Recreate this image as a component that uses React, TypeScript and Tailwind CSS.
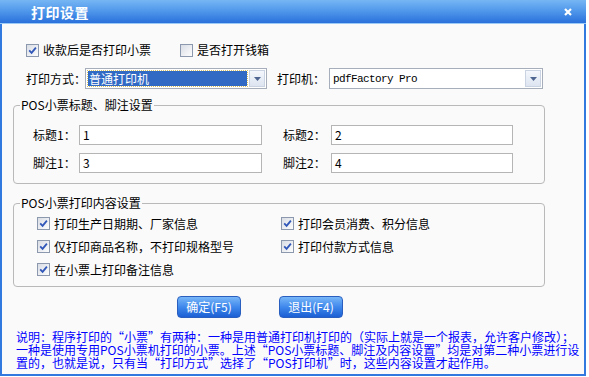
import React from 'react';

const Check: React.FC<{ checked?: boolean }> = ({ checked }) => (
  <span className="w-[13px] h-[13px] shrink-0 border border-[#8b98ad] bg-gradient-to-br from-[#d9dde5] to-[#fdfdfd] flex items-center justify-center">
    {checked && (
      <svg width="9" height="9" viewBox="0 0 9 9">
        <path d="M1.2 4.3 L3.6 6.8 L7.9 1.6" stroke="#3157b9" strokeWidth="1.8" fill="none" />
      </svg>
    )}
  </span>
);

const CheckItem: React.FC<{ label: string; className?: string }> = ({ label, className }) => (
  <div className={`flex items-center gap-[4px] ${className || ''}`}>
    <Check checked />
    <span className="whitespace-nowrap">{label}</span>
  </div>
);

const Arrow = () => (
  <div className="w-[16px] my-[1px] mr-[1px] border border-[#c9d3e2] bg-gradient-to-b from-[#f4f7fc] to-[#dde5f1] flex items-center justify-center">
    <svg width="7" height="4" viewBox="0 0 7 4">
      <path d="M0 0 H7 L3.5 4 Z" fill="#4d6590" />
    </svg>
  </div>
);

const Field: React.FC<{ value: string; className: string }> = ({ value, className }) => (
  <div className={`h-[20px] border border-[#b5b5b5] bg-white pl-[3px] flex items-center ${className}`}>
    {value}
  </div>
);

const lines = [
  '说明：程序打印的“小票”有两种：一种是用普通打印机打印的（实际上就是一个报表，允许客户修改）；',
  '一种是使用专用POS小票机打印的小票。上述“POS小票标题、脚注及内容设置”均是对第二种小票进行设',
  '置的，也就是说，只有当“打印方式”选择了“POS打印机”时，这些内容设置才起作用。',
];

export default function App() {
  return (
    <div className="w-[589px] h-[377px] bg-white font-['Noto_Sans_CJK_SC',sans-serif] text-[12px] leading-[14px] text-black">
      <div className="w-[586px] h-[376px] flex flex-col">
        {/* title bar */}
        <div className="h-[23px] bg-gradient-to-b from-[#76b6f4] via-[#4e96ea] to-[#2a70db] flex items-center justify-between pl-[31px] pr-[14px]">
          <span className="text-white font-bold text-[14px] tracking-[0.5px]">打印设置</span>
          <svg width="8" height="8" viewBox="0 0 8 8">
            <path d="M1 1 L7 7 M7 1 L1 7" stroke="#fff" strokeWidth="2.2" />
          </svg>
        </div>
        <div className="h-[1px] bg-[#9ccaf6]" />

        <div className="flex-1 flex flex-col bg-[#fafafa] border-x-2 border-b-2 border-[#3179de]">
          <div className="mt-[19px] h-[14px] pl-[24px] flex items-center">
            <CheckItem label="收款后是否打印小票" className="w-[154px]" />
            <div className="flex items-center gap-[4px]">
              <span className="w-[13px] h-[13px] border border-[#8b98ad] bg-gradient-to-br from-[#d9dde5] to-[#fdfdfd]" />
              <span>是否打开钱箱</span>
            </div>
          </div>

          <div className="mt-[11px] h-[21px] pl-[24px] flex items-center">
            <span className="w-[59px] whitespace-nowrap">打印方式：</span>
            <div className="w-[182px] h-[21px] border border-[#a6aebc] bg-white flex items-stretch">
              <div className="flex-1 p-[2px] flex">
                <div className="flex-1 bg-[#316ac5] text-white pl-[1px] flex items-center outline-1 outline-dotted outline-[#d8c060]">
                  普通打印机
                </div>
              </div>
              <Arrow />
            </div>
            <span className="ml-[10px] w-[52px] whitespace-nowrap">打印机：</span>
            <div className="w-[214px] h-[21px] border border-[#a6aebc] bg-white flex items-stretch">
              <div className="flex-1 pl-[3px] flex items-center font-['Liberation_Mono',monospace] text-[11px] tracking-[-0.6px]">
                pdfFactory Pro
              </div>
              <Arrow />
            </div>
          </div>

          <fieldset className="mt-[9px] ml-[11px] w-[532px] border border-[#b9b9b9] rounded-[4px] pb-[10px]">
            <legend className="ml-[6px] px-[1px] leading-[14px]">POS小票标题、脚注设置</legend>
            <div className="mt-[13px] pl-[19px] flex items-center">
              <span className="w-[46px]">标题1：</span>
              <Field value="1" className="w-[183px]" />
              <span className="ml-[21px] w-[48px]">标题2：</span>
              <Field value="2" className="w-[182px]" />
            </div>
            <div className="mt-[8px] pl-[19px] flex items-center">
              <span className="w-[46px]">脚注1：</span>
              <Field value="3" className="w-[183px]" />
              <span className="ml-[21px] w-[48px]">脚注2：</span>
              <Field value="4" className="w-[182px]" />
            </div>
          </fieldset>

          <fieldset className="mt-[12px] ml-[11px] w-[532px] border border-[#b9b9b9] rounded-[4px] pb-[5px]">
            <legend className="ml-[6px] px-[1px] leading-[14px]">POS小票打印内容设置</legend>
            <div className="mt-[2px] pl-[23px] flex flex-col">
              <div className="h-[23px] flex items-center">
                <CheckItem label="打印生产日期期、厂家信息" className="w-[244px]" />
                <CheckItem label="打印会员消费、积分信息" />
              </div>
              <div className="h-[23px] flex items-center">
                <CheckItem label="仅打印商品名称，不打印规格型号" className="w-[244px]" />
                <CheckItem label="打印付款方式信息" />
              </div>
              <div className="h-[23px] flex items-center">
                <CheckItem label="在小票上打印备注信息" />
              </div>
            </div>
          </fieldset>

          <div className="mt-[9px] pl-[175px] flex gap-[38px]">
            {['确定(F5)', '退出(F4)'].map((t) => (
              <button
                key={t}
                className="w-[64px] h-[22px] rounded-[4px] border border-[#2a5fc0] bg-gradient-to-b from-[#78b6f7] via-[#3f88ec] to-[#1c5fd4] text-white text-[12px] leading-[14px] flex items-center justify-center"
              >
                {t}
              </button>
            ))}
          </div>

          <div className="mt-[12px] pl-[14px] text-[#0000ff] leading-[13px]">
            {lines.map((l) => (
              <div key={l} className="whitespace-nowrap">{l}</div>
            ))}
          </div>
        </div>
      </div>
    </div>
  );
}
